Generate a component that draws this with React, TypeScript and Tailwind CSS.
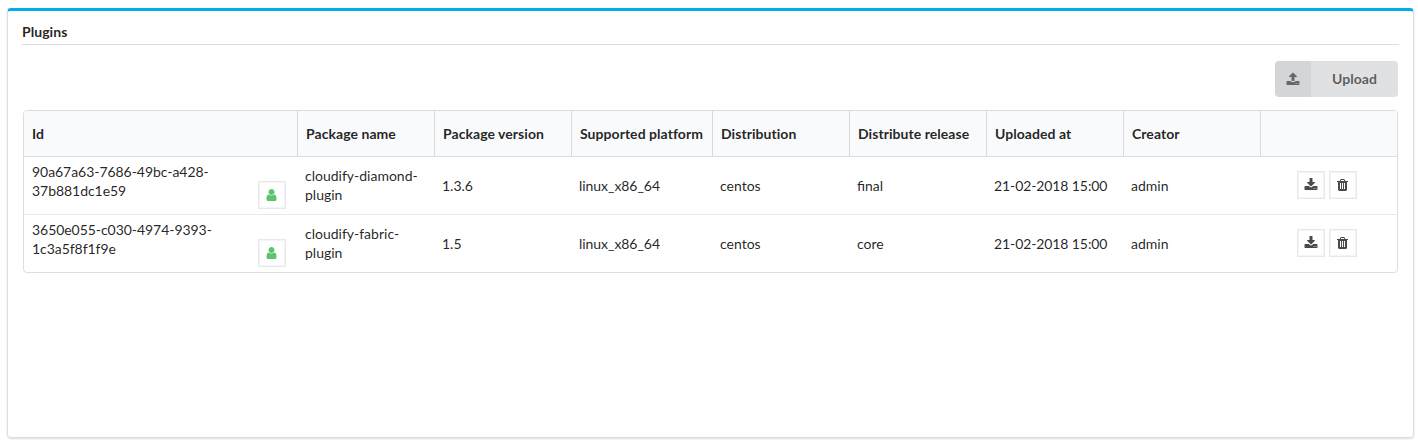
import React from "react";

const paths = {
  upload:
    "M1344 1472q0-26-19-45t-45-19-45 19-19 45 19 45 45 19 45-19 19-45zm256 0q0-26-19-45t-45-19-45 19-19 45 19 45 45 19 45-19 19-45zm128-224v320q0 40-28 68t-68 28h-1472q-40 0-68-28t-28-68v-320q0-40 28-68t68-28h427q21 56 70.5 92t110.5 36h256q61 0 110.5-36t70.5-92h427q40 0 68 28t28 68zm-325-648q-17 40-59 40h-256v448q0 26-19 45t-45 19h-256q-26 0-45-19t-19-45v-448h-256q-42 0-59-40-17-39 14-69l448-448q18-19 45-19t45 19l448 448q31 30 14 69z",
  download:
    "M1344 1344q0-26-19-45t-45-19-45 19-19 45 19 45 45 19 45-19 19-45zm256 0q0-26-19-45t-45-19-45 19-19 45 19 45 45 19 45-19 19-45zm128-224v320q0 40-28 68t-68 28h-1472q-40 0-68-28t-28-68v-320q0-40 28-68t68-28h465l135 136q58 56 136 56t136-56l136-136h464q40 0 68 28t28 68zm-325-569q17 41-14 70l-448 448q-18 19-45 19t-45-19l-448-448q-31-29-14-70 17-39 59-39h256v-448q0-26 19-45t45-19h256q26 0 45 19t19 45v448h256q42 0 59 39z",
  user:
    "M1536 1399q0 109-62.5 187t-150.5 78h-854q-88 0-150.5-78t-62.5-187q0-85 8.5-160.5t31.5-152 58.5-131 94-89 134.5-34.5q131 128 313 128t313-128q76 0 134.5 34.5t94 89 58.5 131 31.5 152 8.5 160.5zm-256-887q0 159-112.5 271.5t-271.5 112.5-271.5-112.5-112.5-271.5 112.5-271.5 271.5-112.5 271.5 112.5 112.5 271.5z",
  trash:
    "M704 1376v-704q0-14-9-23t-23-9h-64q-14 0-23 9t-9 23v704q0 14 9 23t23 9h64q14 0 23-9t9-23zm256 0v-704q0-14-9-23t-23-9h-64q-14 0-23 9t-9 23v704q0 14 9 23t23 9h64q14 0 23-9t9-23zm256 0v-704q0-14-9-23t-23-9h-64q-14 0-23 9t-9 23v704q0 14 9 23t23 9h64q14 0 23-9t9-23zm-544-992h448l-48-117q-7-9-17-11h-317q-10 2-17 11zm928 32v64q0 14-9 23t-23 9h-96v948q0 83-47 143.5t-113 60.5h-832q-66 0-113-58.5t-47-141.5v-952h-96q-14 0-23-9t-9-23v-64q0-14 9-23t23-9h309l70-167q15-37 54-63t79-26h320q40 0 79 26t54 63l70 167h309q14 0 23 9t9 23z",
};

const viewBoxes = {
  upload: "0 0 1792 1792",
  download: "0 0 1792 1792",
  user: "64 0 1792 1792",
  trash: "64 0 1792 1792",
};

function Icon({ name, className = "" }: { name: keyof typeof paths; className?: string }) {
  return (
    <svg viewBox={viewBoxes[name]} className={`size-[14px] fill-current ${className}`} aria-hidden="true">
      <path d={paths[name]} />
    </svg>
  );
}

function IconButton({ name, className = "" }: { name: keyof typeof paths; className?: string }) {
  return (
    <button className={`flex size-7 shrink-0 items-center justify-center border border-[#e8e8e8] bg-white shadow-[inset_0_0_0_1px_#f5f5f5] ${className}`}>
      <Icon name={name} />
    </button>
  );
}

const columns = [
  "Id",
  "Package name",
  "Package version",
  "Supported platform",
  "Distribution",
  "Distribute release",
  "Uploaded at",
  "Creator",
  "",
];

const plugins = [
  {
    id: "90a67a63-7686-49bc-a428-37b881dc1e59",
    cells: ["cloudify-diamond-plugin", "1.3.6", "linux_x86_64", "centos", "final", "21-02-2018 15:00", "admin"],
  },
  {
    id: "3650e055-c030-4974-9393-1c3a5f8f1f9e",
    cells: ["cloudify-fabric-plugin", "1.5", "linux_x86_64", "centos", "core", "21-02-2018 15:00", "admin"],
  },
];

const cellStyles = ["pb-[2px]", "", "tracking-[-0.05px]", "", "", "tracking-[-0.1px]", ""];

const grid = "grid grid-cols-[273px_137px_137px_141px_137px_137px_137px_137px_137px]";

export default function App() {
  return (
    <div className="h-[447px] bg-white pt-2 pr-1 pl-[7px] font-['Lato',sans-serif] text-[14px] leading-[19px] text-black/[.87]">
      <main className="h-[430px] rounded border border-t-[3px] border-[#dcdddd] border-t-[#00aeef] pt-[11px] pr-[14px] pl-[14px] shadow-[0_1px_2px_rgba(34,36,38,0.15)]">
        <h1 className="h-[23px] border-b border-[#dcdddd] font-bold tracking-[0.05px] [font-variant-ligatures:none]">Plugins</h1>
        <div className="mt-4 flex justify-end pr-px">
          <button className="flex h-9 w-[123px] overflow-hidden rounded bg-[#e0e1e2] font-bold text-black/60">
            <span className="flex h-full w-9 items-center justify-center bg-black/5">
              <Icon name="upload" className="opacity-85" />
            </span>
            <span className="flex h-full flex-1 items-center justify-center pb-[2px] tracking-[0.07px]">Upload</span>
          </button>
        </div>
        <section className="mt-[13px] mr-px ml-px overflow-hidden rounded border border-[#dcdddd]">
          <div className={`${grid} h-[46px] border-b border-[#dfe0e1] bg-[#f9fafb] font-bold tracking-[0.05px] [font-variant-ligatures:none]`}>
            {columns.map((label, i) => (
              <div
                key={i}
                className={`flex items-center whitespace-nowrap pl-2 ${i > 0 ? "border-l border-[#d8d9da]" : ""}`}
              >
                {label}
              </div>
            ))}
          </div>
          {plugins.map((plugin, row) => (
            <div key={plugin.id} className={`${grid} ${row > 0 ? "h-[58px] border-t border-[#e8e8e9]" : "h-[57px]"}`}>
              <div className="flex items-start justify-between pt-[5px] pr-[11px] pl-2">
                <span className="w-[190px] tracking-[-0.05px]">{plugin.id}</span>
                <IconButton name="user" className="mt-[19px] text-[#5bc46c]" />
              </div>
              {plugin.cells.map((value, i) => (
                <div key={i} className={`flex items-center pr-2 pl-2 ${cellStyles[i]}`}>
                  {value}
                </div>
              ))}
              <div className="flex items-start justify-center gap-1 pt-[14px] pr-1">
                <IconButton name="download" className="text-[#4a4a4a]" />
                <IconButton name="trash" className="text-[#4a4a4a]" />
              </div>
            </div>
          ))}
        </section>
      </main>
    </div>
  );
}
